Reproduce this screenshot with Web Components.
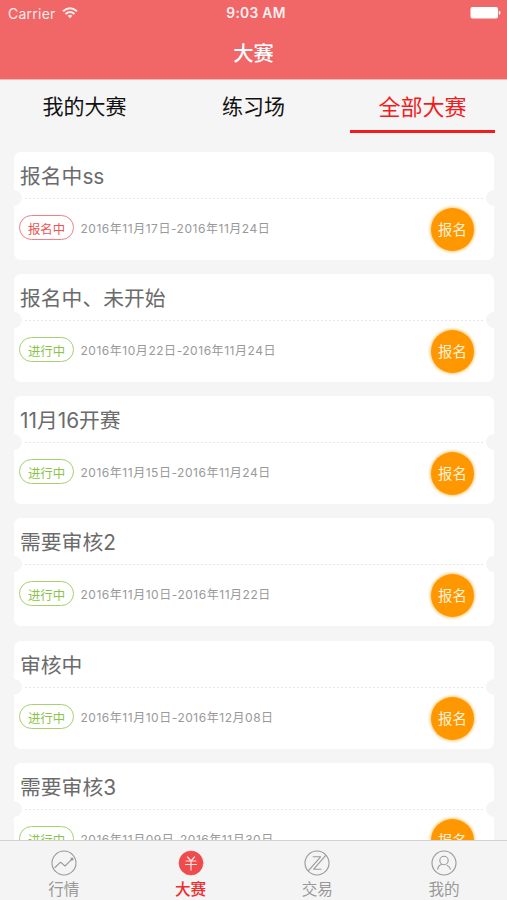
<!DOCTYPE html>
<html lang="zh-CN">
<head>
<meta charset="utf-8">
<title>大赛</title>
<style>
html,body{margin:0;height:100%;overflow:hidden}
body{font-family:Inter,"Noto Sans CJK SC",sans-serif;background:#f5f5f5}
</style>
</head>
<body>
<contest-app></contest-app>
<script>
function define(name, html) {
  customElements.define(name, class extends HTMLElement {
    constructor() {
      super();
      this.attachShadow({ mode: 'open' }).innerHTML = html;
    }
  });
}

define('status-bar', `
<style>
:host{display:grid;grid-template-columns:1fr auto 1fr;align-items:center;height:27px;padding:0 6px 0 8px;color:#fff;font-size:14px;line-height:27px}
.l{display:flex;align-items:center;gap:6px;opacity:.88;letter-spacing:.25px}
.t{font-weight:600;font-size:13.8px;opacity:.9;letter-spacing:.3px;margin-left:3px}
.r{display:flex;justify-content:flex-end}
svg{display:block}
.l svg{margin-top:-2px}
.r svg{margin-top:-1px}
</style>
<div class="l"><span>Carrier</span><svg width="16" height="12" viewBox="0 0 16 12" fill="none" stroke="#fff" stroke-width="1.9"><path d="M1 4.3Q8-1.8 15 4.3M3.5 7Q8 3 12.5 7"/><path d="M5.6 8.7Q8 6.8 10.4 8.7L8 11.3Z" fill="#fff" stroke="none"/></svg></div>
<div class="t">9:03 AM</div>
<div class="r"><svg width="31" height="14" viewBox="0 0 31 14" fill="#fff"><rect x=".5" y="1" width="27.5" height="11.6" rx="2"/><path d="M28.8 4.8Q30.5 5 30.5 6.8T28.8 8.8Z"/></svg></div>`);

define('nav-header', `
<style>
:host{display:block;height:80px;background:#f16667;border-bottom:1px solid #f6b5b5;box-sizing:border-box}
h1{margin:0;text-align:center;color:#fff;font-size:20.3px;line-height:53px;font-weight:500}
</style>
<status-bar></status-bar><h1><slot></slot></h1>`);

define('top-tab', `
<style>
:host{display:block;box-sizing:border-box;width:145px;height:53px;text-align:center;font-size:21px;line-height:54px;color:#111;white-space:nowrap}
:host([active]){color:#f31b1b;border-bottom:3px solid #f31b1b;font-size:22px}
</style><slot></slot>`);

define('top-tabs', `
<style>:host{display:flex;justify-content:space-between;padding:0 12px;height:72px;box-sizing:border-box}</style><slot></slot>`);

customElements.define('contest-card', class extends HTMLElement {
  connectedCallback() {
    const root = this.attachShadow({ mode: 'open' });
    root.innerHTML = `
<style>
:host{display:block;position:relative;box-sizing:border-box;height:108px;flex:none;background:#fff;border-radius:7px;color:#6b6b6b;--tone:#8bc34a;--edge:#a5d26e}
:host([open]){--tone:#ee5253;--edge:#f28084}
:host::before,:host::after{content:"";position:absolute;top:38px;width:17px;height:16px;border-radius:50%;background:#f5f5f5}
:host::before{left:-9px}
:host::after{right:-9px}
.title{height:47px;box-sizing:border-box;margin:0 10px 0 11px;background:repeating-linear-gradient(90deg,#e6e6e6 0 2px,#fff 2px 4px) bottom/100% 1px no-repeat}
h2{margin:0 0 0 -5px;font-weight:400;font-size:20.8px;line-height:50px;height:45px;white-space:nowrap}
.row{display:flex;align-items:center;height:60px;padding:0 20px 0 5px}
.tag{box-sizing:border-box;width:55px;height:25px;border:1px solid var(--edge);border-radius:13px;color:var(--tone);font-size:12.4px;line-height:27px;text-align:center;margin-top:-3px}
.date{font-size:12px;color:#999;margin:-3px auto 0 6.5px;white-space:nowrap;letter-spacing:.53px}
.go{width:43px;height:43px;border-radius:50%;background:#ff9800;color:#fff3dc;box-shadow:0 0 3px 1px #ffc873;font-size:14.4px;line-height:44px;text-align:center;margin:1px 0 0}
</style>
<div class="title"><h2><slot></slot></h2></div>
<div class="row"><span class="tag"></span><span class="date"></span><span class="go">报名</span></div>`;
    root.querySelector('.tag').textContent = this.hasAttribute('open') ? '报名中' : '进行中';
    root.querySelector('.date').textContent = this.getAttribute('date');
  }
});

define('contest-list', `
<style>:host{display:flex;flex-direction:column;gap:14.15px;padding:0 13px 0 14px;flex:1;min-height:0;overflow:hidden}</style><slot></slot>`);

define('tab-item', `
<style>
:host{flex:1;display:flex;flex-direction:column;align-items:center;color:#999;font-size:15.6px;line-height:20px;padding:9px 0 0 1px}
:host([active]){color:#f02b2b;font-weight:500}
::slotted(svg){display:block;width:26px;height:26px;margin-bottom:4px;fill:none;stroke:#999;stroke-width:1.1;stroke-linecap:round;stroke-linejoin:round}
</style><slot name="icon"></slot><span><slot></slot></span>`);

define('tab-bar', `
<style>:host{display:flex;height:60px;box-sizing:border-box;border-top:1px solid #d2d2d2;background:#f4f4f4;flex:none}</style><slot></slot>`);

define('contest-app', `
<style>:host{display:flex;flex-direction:column;height:900px;width:507px;overflow:hidden;background:#f5f5f5}</style>
<nav-header>大赛</nav-header>
<top-tabs><top-tab>我的大赛</top-tab><top-tab>练习场</top-tab><top-tab active>全部大赛</top-tab></top-tabs>
<contest-list>
<contest-card open date="2016年11月17日-2016年11月24日">报名中ss</contest-card>
<contest-card date="2016年10月22日-2016年11月24日">报名中、未开始</contest-card>
<contest-card date="2016年11月15日-2016年11月24日">11月16开赛</contest-card>
<contest-card date="2016年11月10日-2016年11月22日">需要审核2</contest-card>
<contest-card date="2016年11月10日-2016年12月08日">审核中</contest-card>
<contest-card date="2016年11月09日-2016年11月30日">需要审核3</contest-card>
</contest-list>
<tab-bar>
<tab-item><svg slot="icon" viewBox="0 0 26 26"><circle cx="13" cy="13" r="12"/><path d="M4 17.5L9.5 12.2L14 16L21 9.2"/><circle cx="21" cy="9" r="1" fill="#888"/></svg>行情</tab-item>
<tab-item active><svg slot="icon" viewBox="0 0 26 26"><circle cx="13" cy="13" r="12" fill="#f04b4c" stroke="#f04b4c" stroke-width=".6"/><path d="M9.5 7L13 11L16.5 7M8 11H18M7.5 14.5H18.5M13 11V20" stroke="#ffe5e2" stroke-width="1.2"/></svg>大赛</tab-item>
<tab-item><svg slot="icon" viewBox="0 0 26 26" stroke-width="1.2"><circle cx="13" cy="13" r="12"/><path d="M4.3 20.8L16.6 6.8H9.2M21.8 5.4L9.7 19.2H17"/></svg>交易</tab-item>
<tab-item><svg slot="icon" viewBox="0 0 26 26"><circle cx="13" cy="13" r="12"/><circle cx="13" cy="10.5" r="4.2"/><path d="M10.8 14.2Q7 15.5 6.8 19.2M16.2 15.4Q19 16.5 19.3 19.2"/></svg>我的</tab-item>
</tab-bar>`);
</script>
</body>
</html>
